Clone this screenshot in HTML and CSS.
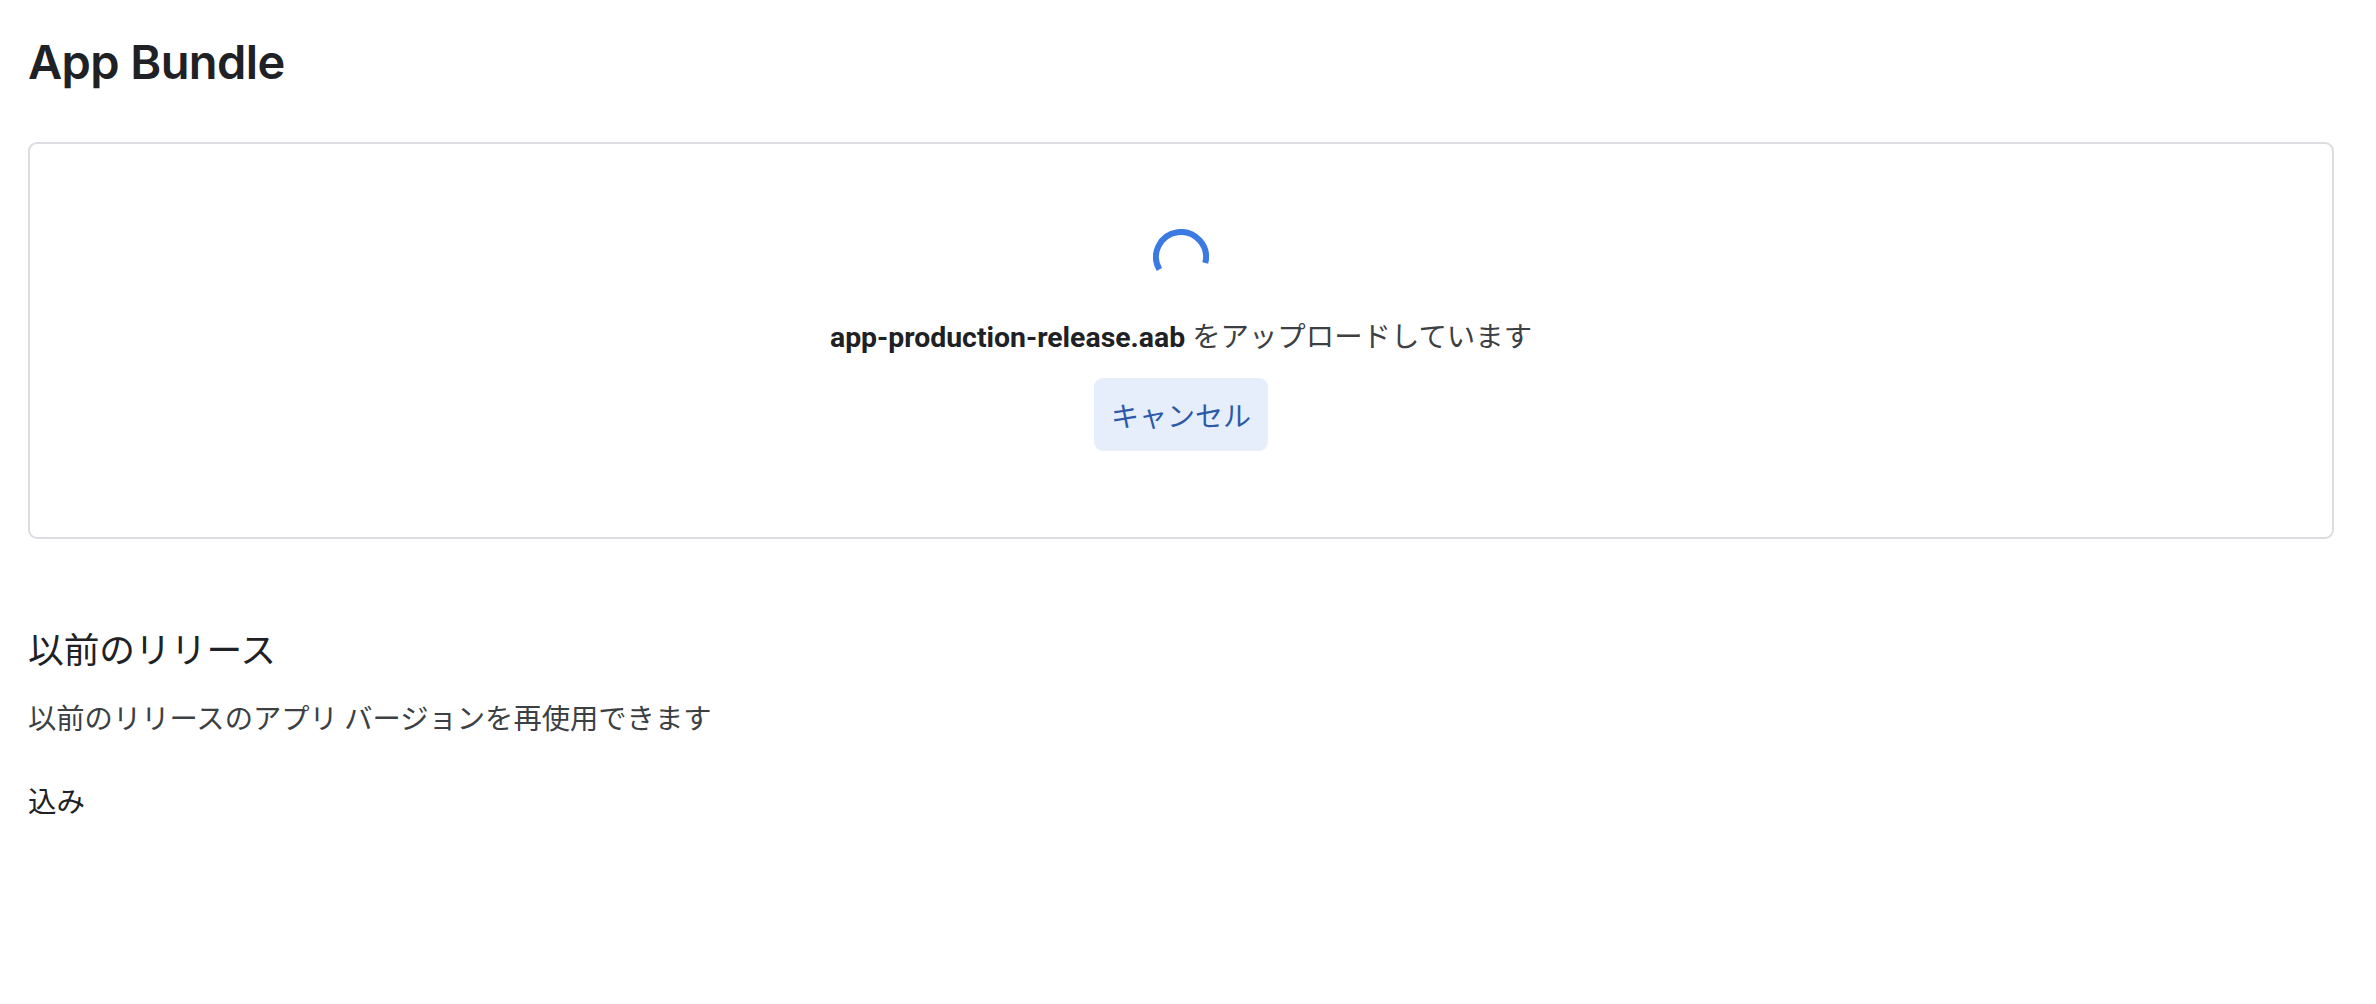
FILE: index.html
```html
<!DOCTYPE html>
<html lang="ja">
<head>
<meta charset="utf-8">
<title>App Bundle</title>
<link rel="stylesheet" href="styles.css">
</head>
<body>
<main class="page">
  <h1 class="title">App Bundle</h1>
  <section class="upload-card">
    <svg class="spinner" width="56" height="56" viewBox="0 0 56 56" aria-hidden="true">
      <path d="M6.35 40.5 A25 25 0 1 1 52.26 34.05" fill="none" stroke="#3a7ae2" stroke-width="6"/>
    </svg>
    <p class="upload-msg"><strong class="file">app-production-release.aab</strong> をアップロードしています</p>
    <button class="cancel" type="button">キャンセル</button>
  </section>
  <section class="previous">
    <h2 class="previous-title">以前のリリース</h2>
    <p class="previous-desc">以前のリリースのアプリ バージョンを再使用できます</p>
    <p class="loading">込み</p>
  </section>
</main>
</body>
</html>
```

FILE: styles.css
```css
html, body {
  margin: 0;
  padding: 0;
  background: #ffffff;
}

body {
  font-family: Roboto, "Noto Sans CJK JP", sans-serif;
  color: #202124;
}

.page {
  padding: 0 42px 0 28px;
  display: flex;
  flex-direction: column;
}

.title {
  margin: 32px 0 0 0;
  font-family: Inter, Roboto, sans-serif;
  font-weight: 600;
  font-size: 47px;
  line-height: 60px;
  letter-spacing: -0.6px;
  color: #202124;
}

.upload-card {
  margin-top: 50px;
  border: 2px solid #dcdde1;
  border-radius: 9px;
  padding: 85px 0 86px 0;
  display: flex;
  flex-direction: column;
  align-items: center;
}

.spinner {
  display: block;
  width: 56px;
  height: 56px;
}

.upload-msg {
  margin: 33px 0 0 0;
  font-family: Roboto, "Noto Sans CJK JP", sans-serif;
  font-size: 28.4px;
  line-height: 40px;
  color: #3c4043;
}

.file {
  font-weight: 700;
  color: #202124;
}

.cancel {
  margin-top: 20px;
  height: 73px;
  padding: 0 17px;
  border: 0;
  border-radius: 9px;
  background: #e6eefb;
  color: #2c5aa8;
  font-family: "Noto Sans CJK JP", sans-serif;
  font-size: 28px;
  line-height: 40px;
  display: flex;
  align-items: center;
}

.previous {
  margin-top: 85px;
  display: flex;
  flex-direction: column;
}

.previous-title {
  margin: 0;
  font-family: "Noto Sans CJK JP", sans-serif;
  font-weight: 400;
  font-size: 35.7px;
  line-height: 48px;
  color: #202124;
}

.previous-desc {
  margin: 25px 0 0 0;
  font-family: "Noto Sans CJK JP", sans-serif;
  font-size: 28.3px;
  line-height: 40px;
  color: #3c4043;
}

.loading {
  margin: 43px 0 0 0;
  font-family: "Noto Sans CJK JP", sans-serif;
  font-size: 28.5px;
  line-height: 40px;
  color: #202124;
}
```
